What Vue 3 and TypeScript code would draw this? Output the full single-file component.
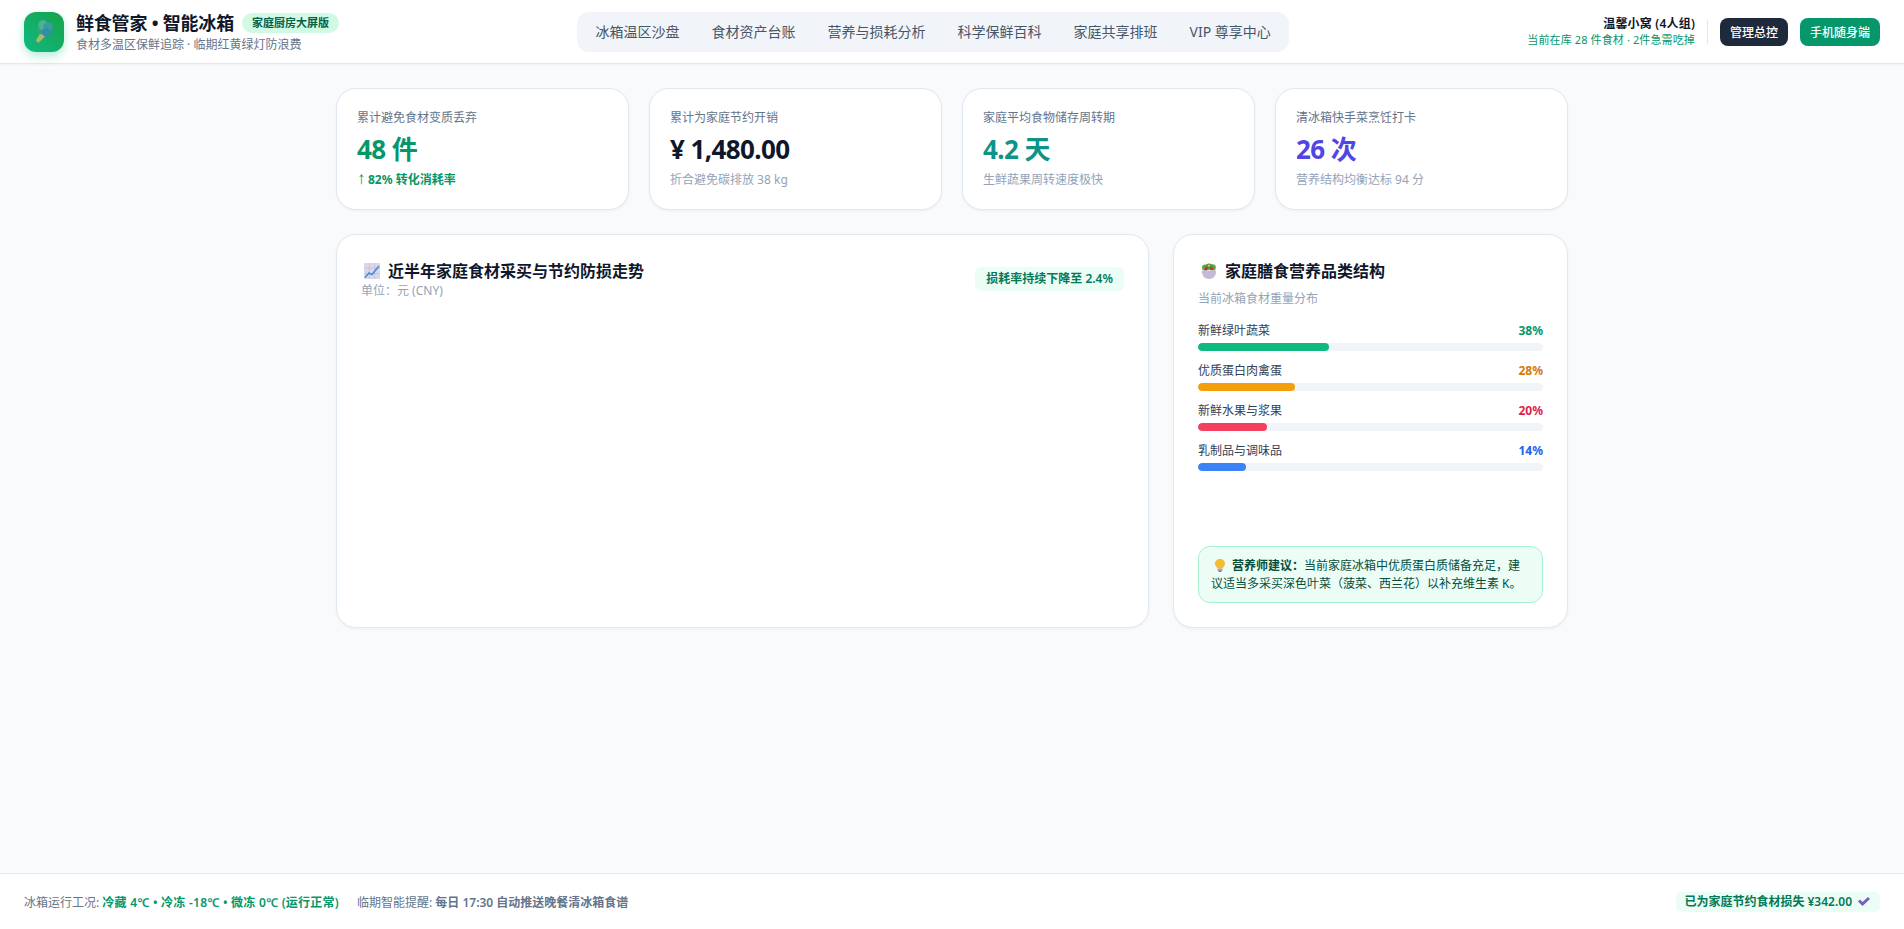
<script setup lang="ts">
const navItems = ['冰箱温区沙盘', '食材资产台账', '营养与损耗分析', '科学保鲜百科', '家庭共享排班', 'VIP 尊享中心']

const stats = [
  { label: '累计避免食材变质丢弃', value: '48 件', tone: 'green', note: '82% 转化消耗率', up: true },
  { label: '累计为家庭节约开销', value: '¥ 1,480.00', tone: 'dark', note: '折合避免碳排放 38 kg', up: false },
  { label: '家庭平均食物储存周转期', value: '4.2 天', tone: 'teal', note: '生鲜蔬果周转速度极快', up: false },
  { label: '清冰箱快手菜烹饪打卡', value: '26 次', tone: 'indigo', note: '营养结构均衡达标 94 分', up: false },
]

const categories = [
  { name: '新鲜绿叶蔬菜', pct: 38, text: '#059669', bar: '#10b981' },
  { name: '优质蛋白肉禽蛋', pct: 28, text: '#d97706', bar: '#f59e0b' },
  { name: '新鲜水果与浆果', pct: 20, text: '#e11d48', bar: '#f43f5e' },
  { name: '乳制品与调味品', pct: 14, text: '#2563eb', bar: '#3b82f6' },
]
</script>

<template>
  <div class="app">
    <header class="topbar">
      <div class="brand">
        <div class="logo">
          <svg width="18" height="23" viewBox="0 0 18 23">
            <path d="M6 12 L10.5 16 L3.4 23 L0.8 20.4 Z" fill="#a5bb6e" />
            <circle cx="6" cy="10" r="4.4" fill="#35a082" />
            <circle cx="8" cy="5" r="4.8" fill="#4fb093" />
            <circle cx="13" cy="7" r="4.8" fill="#3a9ca3" />
            <circle cx="11.5" cy="12.4" r="4.4" fill="#2f8ea8" />
          </svg>
        </div>
        <div class="brand-text">
          <div class="brand-line">
            <span class="brand-name">鲜食管家 • 智能冰箱</span>
            <span class="brand-badge">家庭厨房大屏版</span>
          </div>
          <div class="brand-sub">食材多温区保鲜追踪 · 临期红黄绿灯防浪费</div>
        </div>
      </div>

      <nav class="nav">
        <a v-for="item in navItems" :key="item" class="nav-item">{{ item }}</a>
      </nav>

      <div class="actions">
        <div class="family">
          <div class="family-name">温馨小窝 (4人组)</div>
          <div class="family-sub">当前在库 28 件食材 · 2件急需吃掉</div>
        </div>
        <div class="divider"></div>
        <button class="btn btn-dark">管理总控</button>
        <button class="btn btn-green">手机随身端</button>
      </div>
    </header>

    <main class="main">
      <section class="stats">
        <div v-for="s in stats" :key="s.label" class="card stat">
          <div class="stat-label">{{ s.label }}</div>
          <div class="stat-value" :class="s.tone">{{ s.value }}</div>
          <div class="stat-note" :class="{ strong: s.up }">
            <span v-if="s.up" class="arrow">↑</span>{{ s.note }}
          </div>
        </div>
      </section>

      <section class="panels">
        <div class="card panel-chart">
          <div class="chart-head">
            <div>
              <h2 class="panel-title">
                <svg class="title-icon" width="16" height="16" viewBox="0 0 16 16">
                  <rect width="16" height="16" rx="1" fill="#dcd6e9" />
                  <path d="M5.3 0V16M10.6 0V16M0 5.3H16M0 10.6H16" stroke="#c5bdd8" stroke-width="0.7" />
                  <path d="M1 14.5 L5 10 L8 11.5 L15 3" fill="none" stroke="#3d8fd9" stroke-width="1.6" />
                </svg>
                <span>近半年家庭食材采买与节约防损走势</span>
              </h2>
              <div class="unit">单位：元 (CNY)</div>
            </div>
            <span class="trend">损耗率持续下降至 2.4%</span>
          </div>
        </div>

        <div class="card panel-side">
          <h2 class="panel-title">
            <svg class="title-icon" width="16" height="16" viewBox="0 0 16 16">
              <circle cx="4.2" cy="4.6" r="3.2" fill="#5da83f" />
              <circle cx="11.6" cy="4.4" r="3.2" fill="#5da83f" />
              <circle cx="8" cy="3.6" r="3.2" fill="#4a9438" />
              <circle cx="5" cy="5.8" r="1.7" fill="#c32f4b" />
              <circle cx="10.8" cy="5.6" r="1.7" fill="#d0304f" />
              <circle cx="8" cy="2.6" r="1.2" fill="#e9c33c" />
              <path d="M0.8 7.5 H15.2 C15.2 12 13 16 8 16 C3 16 0.8 12 0.8 7.5 Z" fill="#c3bbd3" />
            </svg>
            <span>家庭膳食营养品类结构</span>
          </h2>
          <div class="side-sub">当前冰箱食材重量分布</div>
          <div class="bars">
            <div v-for="c in categories" :key="c.name" class="bar-row">
              <div class="bar-head">
                <span>{{ c.name }}</span>
                <b :style="{ color: c.text }">{{ c.pct }}%</b>
              </div>
              <div class="track">
                <div class="fill" :style="{ width: c.pct + '%', background: c.bar }"></div>
              </div>
            </div>
          </div>
          <div class="tip">
            <svg class="bulb" width="10" height="13" viewBox="0 0 10 13">
              <path d="M5 0 C8 0 10 2 10 4.8 C10 6.8 8.4 7.6 7.6 9.6 H2.4 C1.6 7.6 0 6.8 0 4.8 C0 2 2 0 5 0 Z" fill="#f6bb33" />
              <rect x="2.6" y="9.6" width="4.8" height="2.4" fill="#a79db8" />
              <rect x="3.6" y="12" width="2.8" height="1" fill="#7f7590" />
            </svg>
            <b>营养师建议：</b>当前家庭冰箱中优质蛋白质储备充足，建议适当多采买深色叶菜（菠菜、西兰花）以补充维生素 K。
          </div>
        </div>
      </section>
    </main>

    <footer class="footer">
      <div class="foot-left">
        <span>冰箱运行工况: <b class="ok">冷藏 4℃ • 冷冻 -18℃ • 微冻 0℃ (运行正常)</b></span>
        <span>临期智能提醒: <b class="remind">每日 17:30 自动推送晚餐清冰箱食谱</b></span>
      </div>
      <div class="saved">
        <span>已为家庭节约食材损失 ¥342.00</span>
        <svg width="12" height="9" viewBox="0 0 12 9">
          <path d="M0 4.6 L2 2.6 L4.5 5 L10 0 L12 2 L4.5 9 Z" fill="#7b5cc2" />
        </svg>
      </div>
    </footer>
  </div>
</template>

<style>
html,
body {
  margin: 0;
  background: #f8fafc;
}
</style>

<style scoped>
.app {
  min-height: 929px;
  display: flex;
  flex-direction: column;
  background: #f8fafc;
  font-family: "Noto Sans", "Noto Sans CJK SC", sans-serif;
  color: #0f172a;
}

.topbar {
  height: 64px;
  box-sizing: border-box;
  padding: 0 24px;
  display: flex;
  align-items: center;
  justify-content: space-between;
  background: #fff;
  border-bottom: 1px solid #e2e8f0;
  box-shadow: 0 1px 2px rgba(15, 23, 42, 0.04);
}

.brand {
  display: flex;
  align-items: center;
  gap: 12px;
}

.logo {
  width: 40px;
  height: 40px;
  border-radius: 12px;
  display: flex;
  align-items: center;
  justify-content: center;
  background: linear-gradient(45deg, #10b981, #16a34a);
  box-shadow: 0 4px 10px rgba(16, 185, 129, 0.3);
}

.brand-line {
  display: flex;
  align-items: center;
  gap: 8px;
}

.brand-name {
  font-size: 18px;
  font-weight: 700;
  line-height: 24px;
  letter-spacing: -0.2px;
}

.brand-badge {
  font-size: 11px;
  font-weight: 600;
  line-height: 16px;
  padding: 2px 10px;
  border-radius: 999px;
  background: #d1fae5;
  color: #065f46;
}

.brand-sub {
  margin-top: 2px;
  font-size: 12px;
  line-height: 16px;
  color: #64748b;
}

.nav {
  display: flex;
  gap: 4px;
  padding: 4px;
  border-radius: 12px;
  background: #f1f5f9;
}

.nav-item {
  padding: 0 14px;
  font-size: 14px;
  line-height: 32px;
  color: #475569;
}

.actions {
  display: flex;
  align-items: center;
  gap: 12px;
}

.family {
  text-align: right;
}

.family-name {
  font-size: 12px;
  font-weight: 600;
  line-height: 16px;
  letter-spacing: 0.2px;
}

.family-sub {
  font-size: 11px;
  line-height: 15px;
  letter-spacing: 0.12px;
  color: #059669;
}

.divider {
  width: 1px;
  height: 24px;
  background: #e2e8f0;
}

.btn {
  height: 28px;
  padding: 0 10px;
  border: none;
  border-radius: 8px;
  font: inherit;
  font-size: 12px;
  font-weight: 500;
  color: #fff;
}

.btn-dark {
  background: #1e293b;
}

.btn-green {
  background: #059669;
}

.main {
  flex: 1;
  width: 1232px;
  margin: 0 auto;
  padding: 24px 0;
}

.card {
  box-sizing: border-box;
  background: #fff;
  border: 1px solid #e2e8f0;
  border-radius: 20px;
  box-shadow: 0 1px 3px rgba(15, 23, 42, 0.05);
}

.stats {
  display: grid;
  grid-template-columns: repeat(4, 1fr);
  gap: 20px;
}

.stat {
  height: 122px;
  padding: 20px;
}

.stat-label {
  font-size: 12px;
  line-height: 18px;
  color: #64748b;
}

.stat-value {
  margin-top: 4px;
  font-size: 26px;
  font-weight: 700;
  line-height: 36px;
  letter-spacing: -0.6px;
}

.green { color: #059669; }
.dark { color: #0f172a; }
.teal { color: #0d9488; }
.indigo { color: #4f46e5; }

.stat-note {
  margin-top: 4px;
  font-size: 12px;
  line-height: 18px;
  color: #94a3b8;
}

.stat-note.strong {
  font-weight: 700;
  color: #059669;
}

.arrow {
  display: inline-block;
  width: 11px;
  font-family: "Liberation Sans", sans-serif;
  font-size: 17px;
  font-weight: 400;
  line-height: 12px;
}

.panels {
  margin-top: 24px;
  display: grid;
  grid-template-columns: 813px 1fr;
  gap: 24px;
  height: 394px;
}

.panel-chart,
.panel-side {
  padding: 24px;
}

.chart-head {
  display: flex;
  justify-content: space-between;
  align-items: center;
}

.panel-title {
  margin: 0;
  display: flex;
  align-items: center;
  font-size: 16px;
  font-weight: 700;
  line-height: 24px;
}

.title-icon {
  margin: 0 8px 0 3px;
}

.unit {
  font-size: 12px;
  line-height: 16px;
  color: #94a3b8;
}

.trend {
  padding: 4px 11px;
  border-radius: 6px;
  font-size: 12px;
  font-weight: 600;
  line-height: 16px;
  background: #ecfdf5;
  color: #047857;
}

.panel-side {
  display: flex;
  flex-direction: column;
}

.side-sub {
  margin-top: 7px;
  font-size: 12px;
  line-height: 18px;
  color: #94a3b8;
}

.bars {
  margin-top: 14px;
  display: flex;
  flex-direction: column;
  gap: 11px;
}

.bar-head {
  display: flex;
  justify-content: space-between;
  font-size: 12px;
  line-height: 18px;
  color: #334155;
}

.track {
  height: 8px;
  margin-top: 3px;
  border-radius: 999px;
  background: #f1f5f9;
  overflow: hidden;
}

.fill {
  height: 100%;
  border-radius: 999px;
}

.tip {
  margin-top: auto;
  padding: 10px 12px;
  border: 1px solid #a7f3d0;
  border-radius: 12px;
  background: #ecfdf5;
  font-size: 12px;
  line-height: 17.4px;
  color: #064e3b;
}

.bulb {
  margin: 0 7px 0 4px;
  vertical-align: -2px;
}

.footer {
  height: 56px;
  box-sizing: border-box;
  padding: 0 24px;
  display: flex;
  align-items: center;
  justify-content: space-between;
  background: #fff;
  border-top: 1px solid #e2e8f0;
  font-size: 12px;
  color: #64748b;
}

.foot-left {
  display: flex;
  gap: 18px;
}

.foot-left b {
  font-weight: 600;
}

.ok {
  letter-spacing: 0.25px;
  color: #059669;
}

.remind {
  color: #64748b;
}

.saved {
  display: flex;
  align-items: center;
  gap: 6px;
  padding: 2px 10px 2px 8px;
  border-radius: 5px;
  background: #ecfdf5;
  font-weight: 600;
  line-height: 16px;
  color: #047857;
}
</style>
